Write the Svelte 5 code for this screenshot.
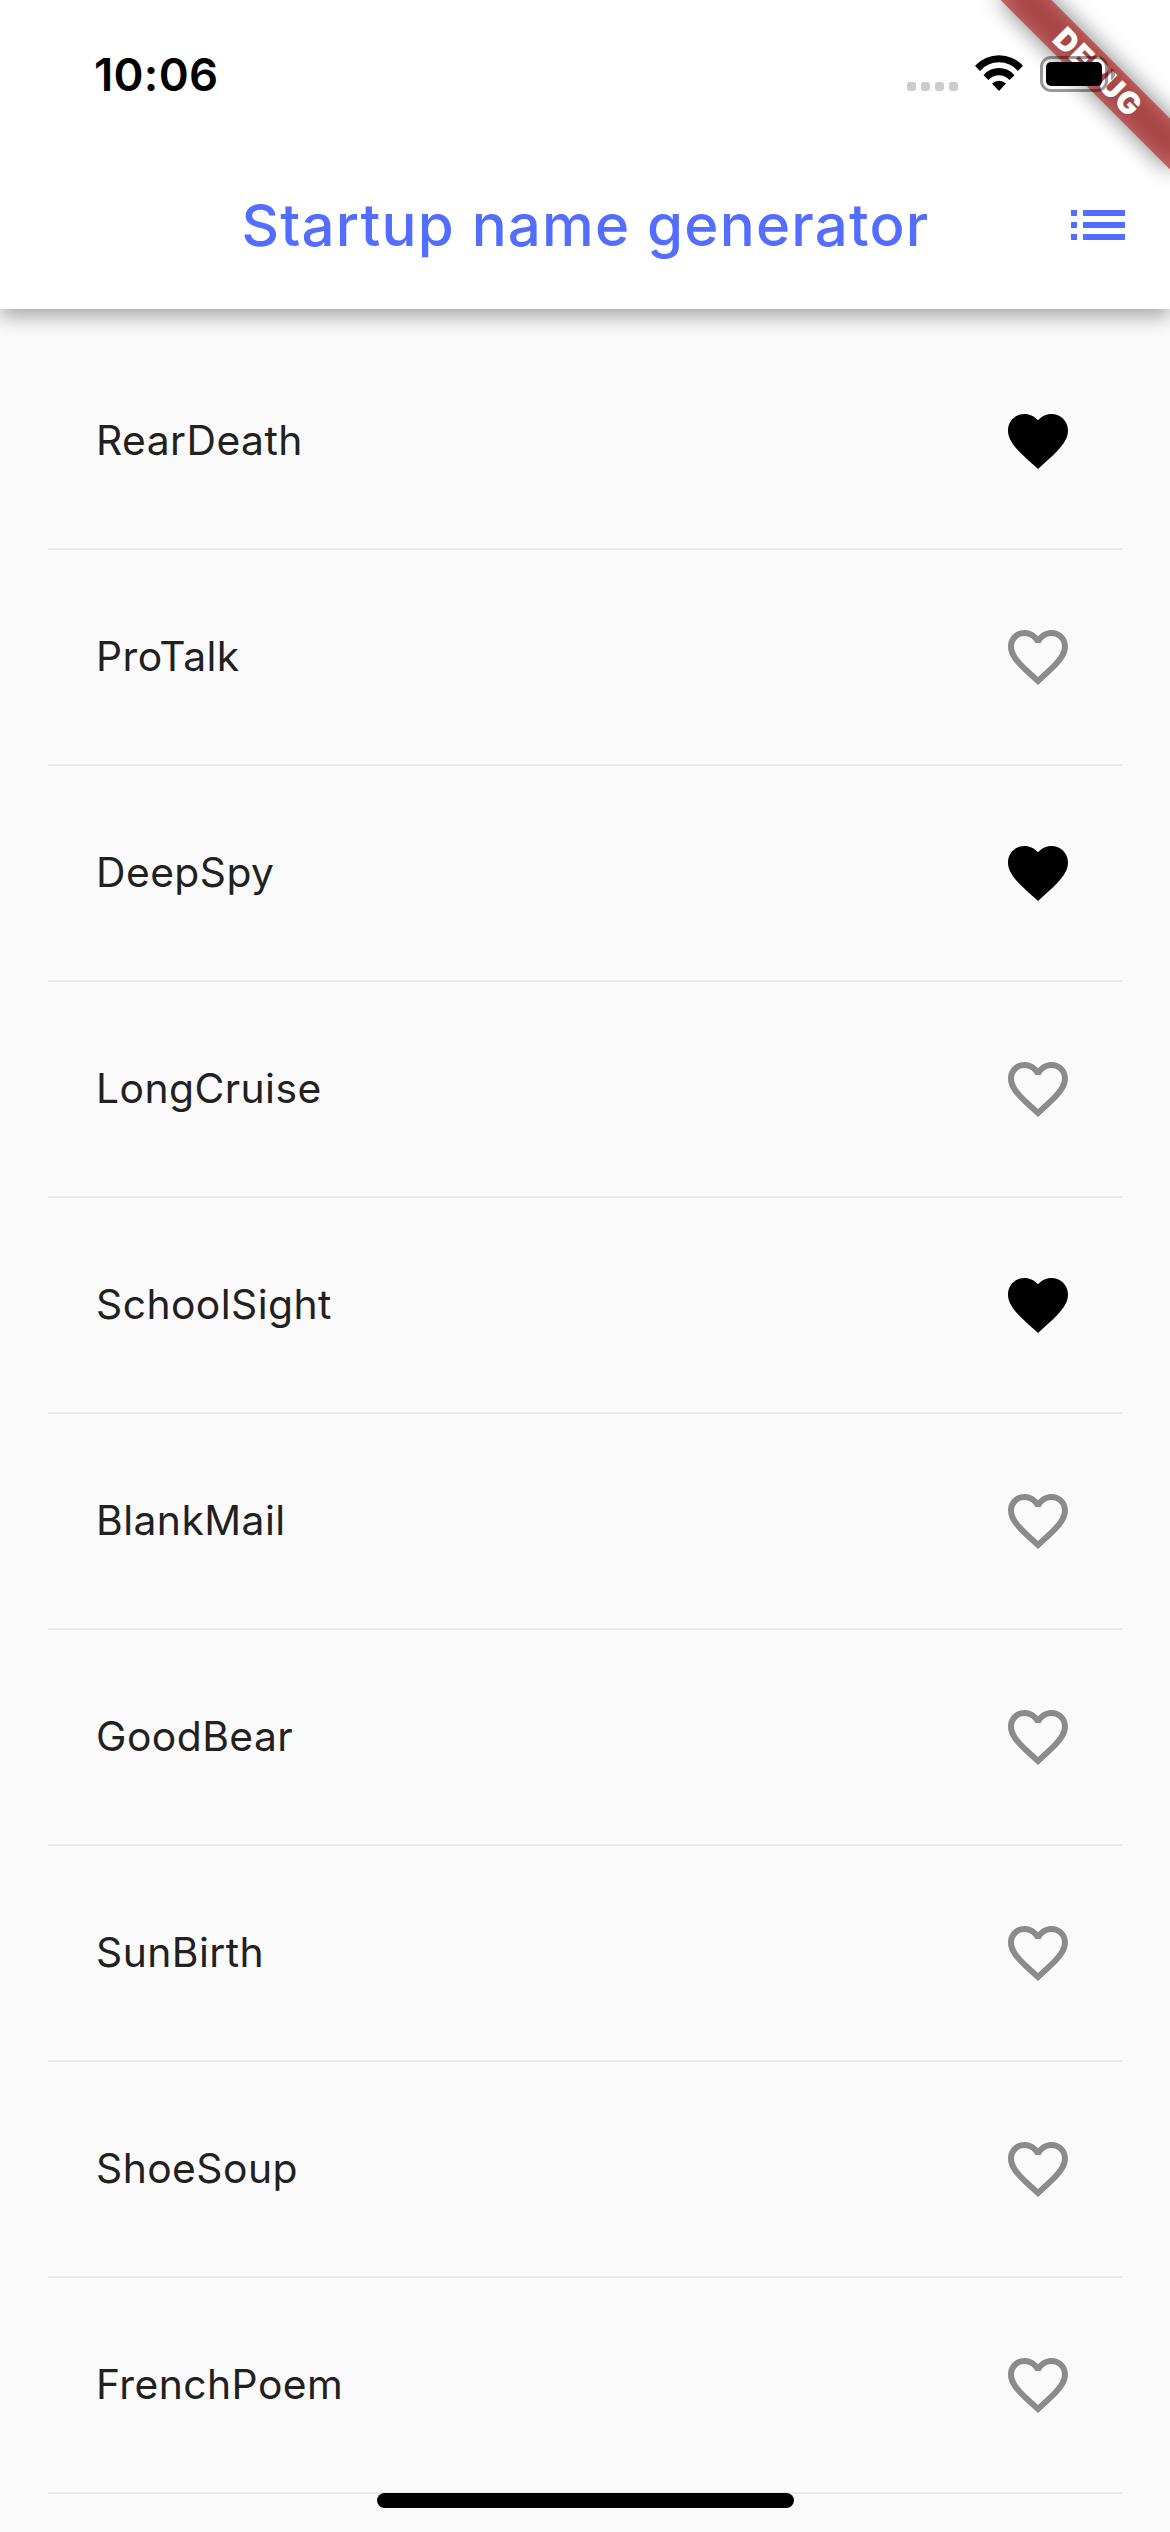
<script>
  const names = [
    { text: 'RearDeath', liked: true },
    { text: 'ProTalk', liked: false },
    { text: 'DeepSpy', liked: true },
    { text: 'LongCruise', liked: false },
    { text: 'SchoolSight', liked: true },
    { text: 'BlankMail', liked: false },
    { text: 'GoodBear', liked: false },
    { text: 'SunBirth', liked: false },
    { text: 'ShoeSoup', liked: false },
    { text: 'FrenchPoem', liked: false },
  ];
  const dots = [0, 1, 2, 3];
</script>

<div class="screen">
  <header class="top">
    <div class="status">
      <span class="time">10:06</span>
      <div class="indicators">
        <div class="dots">
          {#each dots as dot (dot)}<i class="dot"></i>{/each}
        </div>
        <svg class="wifi" viewBox="975 55 48 36" width="48" height="36">
          <path d="M975 65.7A32.7 32.7 0 0 1 1023 65.7L1018 70.9A25.4 25.4 0 0 0 980 70.9Z" />
          <path d="M983.5 75.2A20.1 20.1 0 0 1 1014.5 75.2L1009.5 79.9A14 14 0 0 0 988.5 79.9Z" />
          <path d="M992 83.6A10 10 0 0 1 1006 83.6L999 91Z" />
        </svg>
        <svg class="battery" viewBox="0 0 76 36" width="76" height="36">
          <rect x="1.5" y="1.5" width="65" height="33" rx="9.5" fill="none" stroke="#000" stroke-opacity=".4" stroke-width="3" />
          <rect x="6" y="6" width="56" height="24" rx="5" />
          <path d="M71 12Q75 14 75 18T71 24Z" fill-opacity=".4" />
        </svg>
      </div>
    </div>
    <div class="appbar">
      <h1>Startup name generator</h1>
      <svg class="menu" viewBox="0 0 54 30" width="54" height="30">
        <path d="M0 0h6v6H0zM12 0h42v6H12zM0 12h6v6H0zM12 12h42v6H12zM0 24h6v6H0zM12 24h42v6H12z" />
      </svg>
    </div>
  </header>

  <ul class="list">
    {#each names as name (name.text)}
      <li class="row">
        <span class="name">{name.text}</span>
        <svg class="heart" class:liked={name.liked} viewBox="0 0 24 24" width="72" height="72">
          {#if name.liked}
            <path d="M12 21.35l-1.45-1.32C5.4 15.36 2 12.28 2 8.5 2 5.42 4.42 3 7.5 3c1.74 0 3.41.81 4.5 2.09C13.09 3.81 14.76 3 16.5 3 19.58 3 22 5.42 22 8.5c0 3.78-3.4 6.86-8.55 11.54L12 21.35z" />
          {:else}
            <path d="M16.5 3c-1.74 0-3.41.81-4.5 2.09C10.91 3.81 9.24 3 7.5 3 4.42 3 2 5.42 2 8.5c0 3.78 3.4 6.86 8.55 11.54L12 21.35l1.45-1.32C18.6 15.36 22 12.28 22 8.5 22 5.42 19.58 3 16.5 3zm-4.4 15.55l-.1.1-.1-.1C7.14 14.24 4 11.39 4 8.5 4 6.5 5.5 5 7.5 5c1.54 0 3.04.99 3.57 2.36h1.87C13.46 5.99 14.96 5 16.5 5c2 0 3.5 1.5 3.5 3.5 0 2.89-3.14 5.74-7.9 10.05z" />
          {/if}
        </svg>
      </li>
    {/each}
  </ul>

  <div class="ribbon"><span>DEBUG</span></div>
  <div class="home"></div>
</div>

<style>
  :global(body) {
    margin: 0;
    background: #fafafa;
  }
  .screen {
    position: relative;
    width: 1170px;
    height: 2532px;
    overflow: hidden;
    background: #fafafa;
    font-family: Inter, 'Liberation Sans', sans-serif;
  }
  .top {
    height: 309px;
    background: #fff;
    box-shadow: 0 8px 18px rgba(0, 0, 0, 0.32);
  }
  .status {
    box-sizing: border-box;
    height: 141px;
    padding: 55px 54px 0 94px;
    display: flex;
    justify-content: space-between;
    align-items: flex-start;
  }
  .time {
    font-size: 45.5px;
    line-height: 40px;
    font-weight: 600;
    letter-spacing: 0.3px;
  }
  /* Kept above the ribbon, which runs beneath the battery */
  .indicators {
    position: relative;
    z-index: 2;
    display: flex;
    align-items: flex-start;
  }
  .dots {
    display: flex;
    gap: 5px;
    padding-top: 27px;
    margin-right: 17px;
  }
  .dot {
    width: 9px;
    height: 9px;
    border-radius: 3px;
    background: #ccc;
  }
  .battery {
    margin: 1px 0 0 17px;
  }
  .appbar {
    box-sizing: border-box;
    height: 168px;
    padding: 0 45px 0 100px;
    display: grid;
    grid-template-columns: 1fr 54px;
    align-items: center;
    color: #536dfe;
  }
  h1 {
    margin: 0;
    font-size: 58.2px;
    line-height: 72px;
    font-weight: 500;
    letter-spacing: 1.2px;
    text-align: center;
    white-space: nowrap;
  }
  .menu {
    fill: #536dfe;
  }
  .list {
    list-style: none;
    margin: 0;
    padding: 25px 48px 0;
  }
  .row {
    box-sizing: border-box;
    height: 216px;
    padding: 0 48px;
    display: flex;
    align-items: center;
    justify-content: space-between;
    border-bottom: 2px solid #e9e9e9;
  }
  .name {
    padding-bottom: 3px;
    font-size: 40.8px;
    line-height: 48px;
    letter-spacing: 0.45px;
    color: #212121;
  }
  .heart {
    fill: #8b8b8b;
  }
  .heart.liked {
    fill: #000;
  }
  .ribbon {
    position: absolute;
    z-index: 1;
    left: 978px;
    top: 54px;
    width: 240px;
    height: 36px;
    transform: rotate(45deg);
    display: flex;
    align-items: center;
    justify-content: center;
    color: #fff;
    font-size: 30.5px;
    line-height: 36px;
    font-weight: 900;
    letter-spacing: 0.9px;
  }
  .ribbon::before,
  .ribbon::after {
    content: '';
    position: absolute;
    z-index: -1;
    inset: 0;
  }
  .ribbon::before {
    background: rgba(0, 0, 0, 0.5);
    filter: blur(11.9px);
  }
  .ribbon::after {
    background: rgba(183, 28, 28, 0.627);
  }
  .home {
    position: absolute;
    left: 377px;
    bottom: 24px;
    width: 417px;
    height: 15px;
    border-radius: 8px;
    background: #000;
  }
</style>
